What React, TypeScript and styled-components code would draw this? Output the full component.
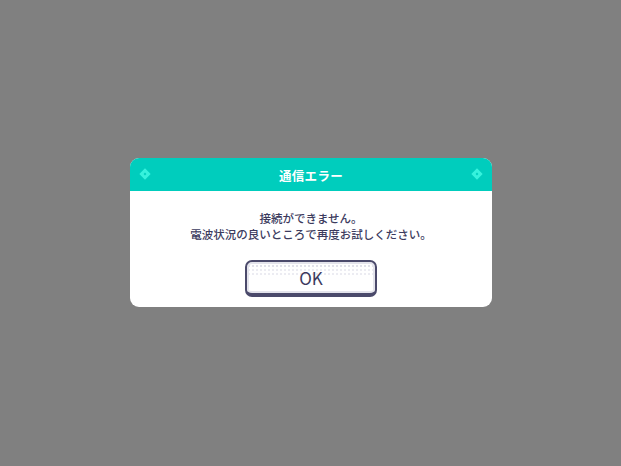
import React from "react";
import styled, { createGlobalStyle } from "styled-components";

const GlobalStyle = createGlobalStyle`
	html, body {
		margin: 0;
		padding: 0;
		height: 100%;
	}
	body {
		background: #808080;
		font-family: "Noto Sans CJK JP", "Noto Sans", sans-serif;
	}
	#root {
		height: 100%;
	}
`;

const Screen = styled.div`
	width: 621px;
	height: 466px;
	display: flex;
	justify-content: center;
	padding-top: 158px;
	box-sizing: border-box;
	padding-left: 1px;
`;

const Dialog = styled.section`
	width: 362px;
	height: 149px;
	background: #ffffff;
	border-radius: 9px;
	overflow: hidden;
	display: flex;
	flex-direction: column;
`;

const Header = styled.header`
	height: 33px;
	background: #00cdbd;
	display: flex;
	align-items: center;
	justify-content: space-between;
	padding: 0 11px;
	box-sizing: border-box;
`;

const Title = styled.h1`
	margin: 0;
	font-size: 12.5px;
	font-weight: 700;
	color: #ffffff;
	letter-spacing: 0.3px;
	padding-top: 2px;
`;

// small hollow diamond in the header corners
const Diamond = styled.span`
	width: 8px;
	height: 8px;
	border: 3px solid #36f2dd;
	transform: rotate(45deg);
	box-sizing: border-box;
	margin-top: -1px;
`;

const Body = styled.div`
	flex: 1;
	display: flex;
	flex-direction: column;
	align-items: center;
	padding-top: 20px;
`;

const Message = styled.p`
	margin: 0;
	font-size: 11.5px;
	font-weight: 500;
	line-height: 15.5px;
	color: #3c3b5e;
	text-align: center;
`;

const OkButton = styled.button`
	margin-top: 18px;
	width: 132px;
	height: 37px;
	border: 2px solid #4b4a6b;
	border-bottom-width: 4px;
	border-radius: 7px;
	background: #ffffff;
	padding: 0;
	box-sizing: border-box;
	position: relative;
	font-family: "Noto Sans CJK JP", "Noto Sans", sans-serif;
	font-weight: 400;
	font-size: 17px;
	color: #3c3b5e;
	box-shadow: inset 0 0 0 2px #e4e4ec;
	background-image: radial-gradient(circle, #e2e2ea 0.9px, transparent 1.1px);
	background-size: 4px 4px;
	background-position: 0 2px;
	background-repeat: repeat-x;

	&::after {
		content: "";
		position: absolute;
		left: 2px;
		right: 2px;
		top: 6px;
		height: 8px;
		background-image: radial-gradient(circle, #ececf2 0.8px, transparent 1px);
		background-size: 4px 4px;
		background-position: 2px 0;
	}
`;

const Label = styled.span`
	position: relative;
	z-index: 1;
	display: block;
	line-height: 31px;
`;

export default function App() {
	return (
		<>
			<GlobalStyle />
			<Screen>
				<Dialog>
					<Header>
						<Diamond />
						<Title>通信エラー</Title>
						<Diamond />
					</Header>
					<Body>
						<Message>
							接続ができません。
							<br />
							電波状況の良いところで再度お試しください。
						</Message>
						<OkButton>
							<Label>OK</Label>
						</OkButton>
					</Body>
				</Dialog>
			</Screen>
		</>
	);
}
